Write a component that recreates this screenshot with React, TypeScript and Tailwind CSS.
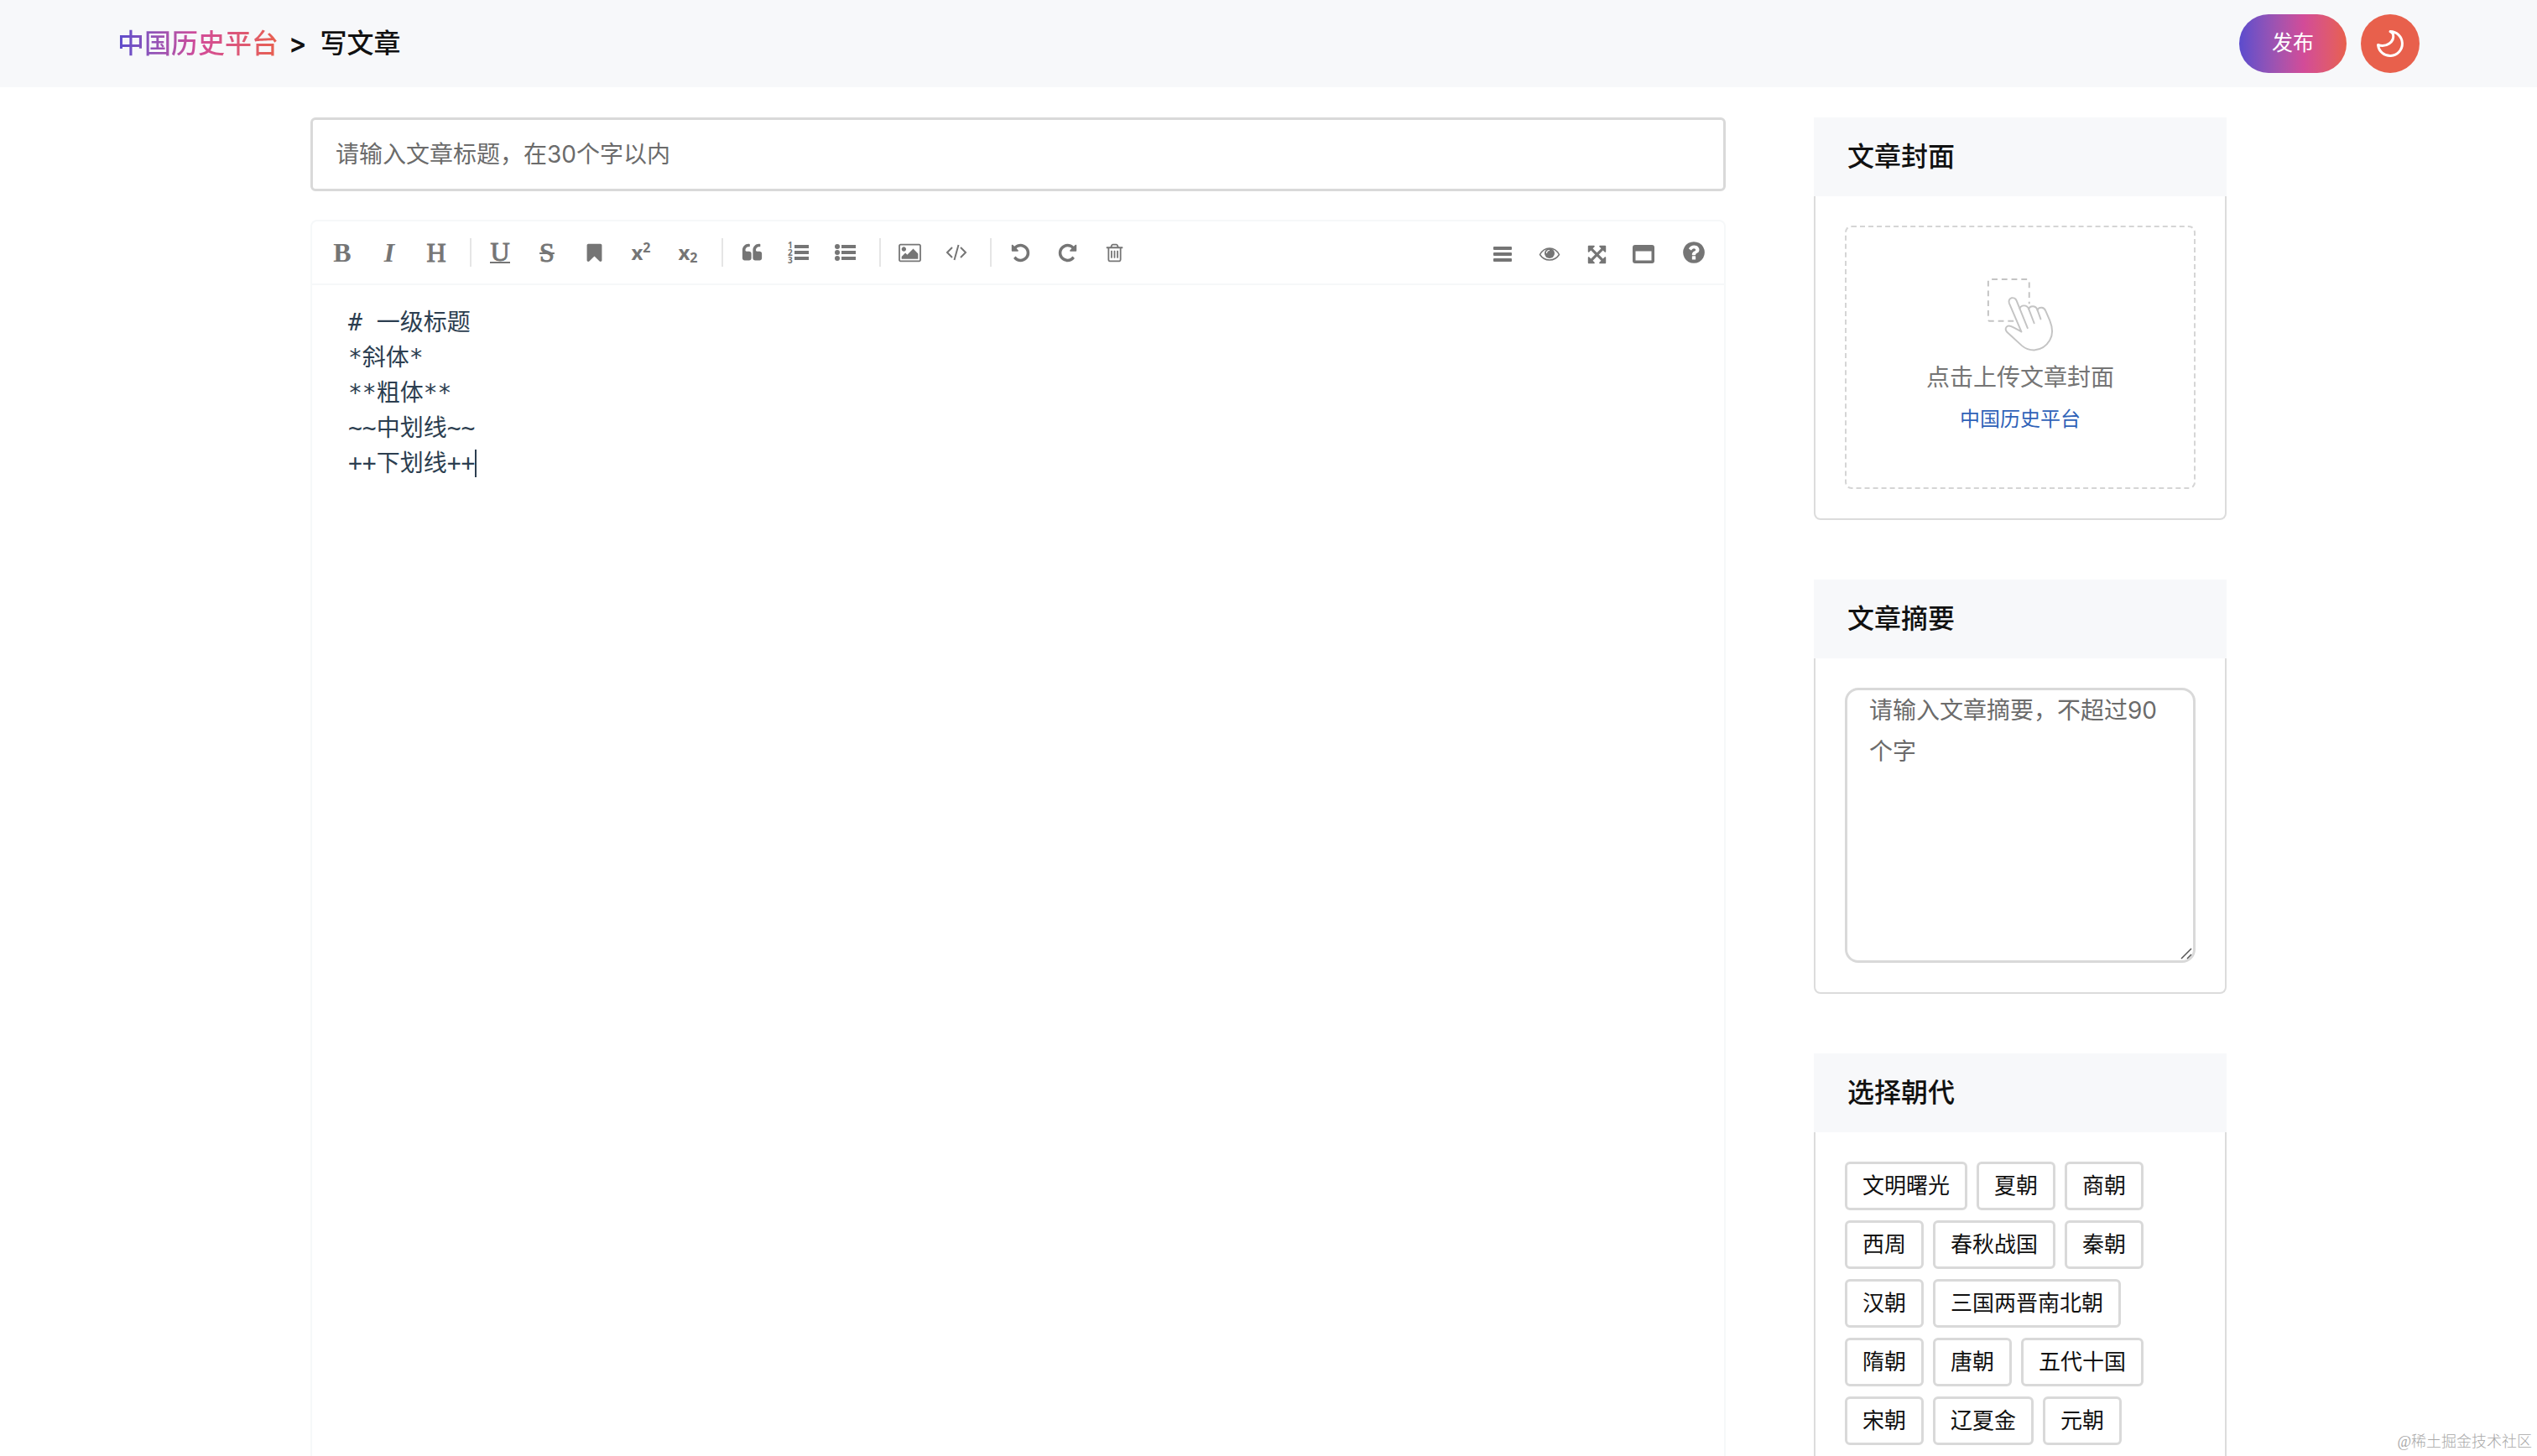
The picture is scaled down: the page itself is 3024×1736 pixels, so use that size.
import React, { useState } from 'react'

const DYNASTIES = [
  '文明曙光', '夏朝', '商朝',
  '西周', '春秋战国', '秦朝',
  '汉朝', '三国两晋南北朝',
  '隋朝', '唐朝', '五代十国',
  '宋朝', '辽夏金', '元朝',
]

const DEFAULT_CONTENT = '# 一级标题\n*斜体*\n**粗体**\n~~中划线~~\n++下划线++'

const UNDO_PATH = 'M1664 896q0 156-61 298t-164 245-245 164-298 61q-172 0-327-72.5t-264-204.5q-7-10-6.5-22.5t8.5-20.5l137-138q10-9 25-9 16 2 23 12 73 95 179 147t225 52q104 0 198.5-40.5t163.5-109.5 109.5-163.5 40.5-198.5-40.5-198.5-109.5-163.5-163.5-109.5-198.5-40.5q-98 0-188 35.5t-160 101.5l137 138q31 30 14 69-17 40-59 40h-448q-26 0-45-19t-19-45v-448q0-42 40-59 39-17 69 14l130 129q107-101 244.5-156.5t284.5-55.5q156 0 298 61t245 164 164 245 61 298z'
const BOOKMARK_PATH = 'M1420 128q23 0 44 9 33 13 52.5 41t19.5 62v1289q0 34-19.5 62t-52.5 41q-19 8-44 8-48 0-83-32l-441-424-441 424q-36 33-83 33-23 0-44-9-33-13-52.5-41t-19.5-62v-1289q0-34 19.5-62t52.5-41q21-9 44-9h1048z'
const QUOTE_PATH = 'M832 960v384q0 80-56 136t-136 56h-384q-80 0-136-56t-56-136v-704q0-104 40.5-198.5t109.5-163.5 163.5-109.5 198.5-40.5h64q26 0 45 19t19 45v128q0 26-19 45t-45 19h-64q-106 0-181 75t-75 181v32q0 40 28 68t68 28h224q80 0 136 56t56 136zm896 0v384q0 80-56 136t-136 56h-384q-80 0-136-56t-56-136v-704q0-104 40.5-198.5t109.5-163.5 163.5-109.5 198.5-40.5h64q26 0 45 19t19 45v128q0 26-19 45t-45 19h-64q-106 0-181 75t-75 181v32q0 40 28 68t68 28h224q80 0 136 56t56 136z'
const IMAGE_PATH = 'M576 576q0 80-56 136t-136 56-136-56-56-136 56-136 136-56 136 56 56 136zm1024 384v448h-1408v-192l320-320 160 160 512-512zm96-704h-1600q-13 0-22.5 9.5t-9.5 22.5v1216q0 13 9.5 22.5t22.5 9.5h1600q13 0 22.5-9.5t9.5-22.5v-1216q0-13-9.5-22.5t-22.5-9.5zm160 32v1216q0 66-47 113t-113 47h-1600q-66 0-113-47t-47-113v-1216q0-66 47-113t113-47h1600q66 0 113 47t47 113z'
const TRASH_PATH = 'M704 736v576q0 14-9 23t-23 9h-64q-14 0-23-9t-9-23v-576q0-14 9-23t23-9h64q14 0 23 9t9 23zm256 0v576q0 14-9 23t-23 9h-64q-14 0-23-9t-9-23v-576q0-14 9-23t23-9h64q14 0 23 9t9 23zm256 0v576q0 14-9 23t-23 9h-64q-14 0-23-9t-9-23v-576q0-14 9-23t23-9h64q14 0 23 9t9 23zm128 724v-948h-896v948q0 22 7 40.5t14.5 27 10.5 8.5h832q3 0 10.5-8.5t14.5-27 7-40.5zm-672-1076h448l-48-117q-7-9-17-11h-317q-10 2-17 11zm928 32v64q0 14-9 23t-23 9h-96v948q0 83-47 143.5t-113 60.5h-832q-66 0-113-58.5t-47-141.5v-952h-96q-14 0-23-9t-9-23v-64q0-14 9-23t23-9h309l70-167q15-37 54-63t79-26h320q40 0 79 26t54 63l70 167h309q14 0 23 9t9 23z'
const EXPAND_PATH = 'M1411 541l-355 355 355 355 144-144q29-31 70-14 39 17 39 59v448q0 26-19 45t-45 19h-448q-42 0-59-40-17-39 14-69l144-144-355-355-355 355 144 144q31 30 14 69-17 40-59 40h-448q-26 0-45-19t-19-45v-448q0-42 40-59 39-17 69 14l144 144 355-355-355-355-144 144q-19 19-45 19-12 0-24-5-40-17-40-59v-448q0-26 19-45t45-19h448q42 0 59 40 17 39-14 69l-144 144 355 355 355-355-144-144q-31-30-14-69 17-40 59-40h448q26 0 45 19t19 45v448q0 42-39 59-13 5-25 5-26 0-45-19z'
const HELP_PATH = 'M1024 1376v-192q0-14-9-23t-23-9h-192q-14 0-23 9t-9 23v192q0 14 9 23t23 9h192q14 0 23-9t9-23zm256-672q0-88-55.5-163t-138.5-116-170-41q-243 0-371 213-15 24 8 42l132 100q7 6 19 6 16 0 25-12 53-68 86-92 34-24 86-24 48 0 85.5 26t37.5 59q0 38-20 61t-68 45q-63 28-115.5 86.5t-52.5 125.5v36q0 14 9 23t23 9h192q14 0 23-9t9-23q0-19 21.5-49.5t54.5-49.5q32-18 49-28.5t46-35 44.5-48 28-60.5 12.5-81zm384 192q0 209-103 385.5t-279.5 279.5-385.5 103-385.5-103-279.5-279.5-103-385.5 103-385.5 279.5-279.5 385.5-103 385.5 103 279.5 279.5 103 385.5z'

const Glyph: React.FC<{ d: string; className?: string }> = ({ d, className = 'size-[25px]' }) => (
  <svg viewBox="0 0 1792 1792" fill="currentColor" className={`${className} overflow-visible`}>
    <path d={d} />
  </svg>
)

const ListIcon: React.FC<{ ordered?: boolean }> = ({ ordered }) => (
  <svg viewBox="0 0 26 26" fill="currentColor" className="size-[26px] overflow-visible">
    <path d="M8 4h17v4H8zM8 11h17v4H8zM8 18h17v4H8z" />
    {ordered ? (
      <g fontSize="10" fontWeight="700" fontFamily="Noto Sans, sans-serif">
        <text x="0" y="8">1</text>
        <text x="0" y="17">2</text>
        <text x="0" y="26">3</text>
      </g>
    ) : (
      <g>
        <circle cx="3" cy="6" r="3" />
        <circle cx="3" cy="13" r="3" />
        <circle cx="3" cy="20" r="3" />
      </g>
    )}
  </svg>
)

const CodeIcon = () => (
  <svg viewBox="0 0 26 22" fill="none" stroke="currentColor" strokeWidth="2" className="h-[22px] w-[26px]">
    <path d="M8 5L2 11l6 6M18 5l6 6-6 6M15.500 2L10.500 20" />
  </svg>
)

const EyeIcon = () => (
  <svg viewBox="0 0 26 18" fill="none" className="h-[18px] w-[26px]">
    <path d="M1.500 9.500C4 5 8 2 13 2s9 3 11.500 7.500C22 13.500 18 16 13 16S4 13.500 1.500 9.500z" stroke="currentColor" strokeWidth="1.500" />
    <circle cx="13" cy="8" r="6" fill="currentColor" />
    <path d="M9.500 8A3.500 3.500 0 0 1 13 4.500" stroke="#fff" strokeWidth="1.200" />
  </svg>
)

const MenuIcon = () => (
  <svg viewBox="0 0 22 18" fill="currentColor" className="h-[18px] w-[22px]">
    <rect y="0" width="22" height="4" rx="1" />
    <rect y="7" width="22" height="4" rx="1" />
    <rect y="14" width="22" height="4" rx="1" />
  </svg>
)

const WindowIcon = () => (
  <svg viewBox="0 0 26 22" fill="currentColor" className="h-[22px] w-[26px]">
    <path fillRule="evenodd" d="M3 0h20a3 3 0 0 1 3 3v16a3 3 0 0 1-3 3H3a3 3 0 0 1-3-3V3a3 3 0 0 1 3-3zM3.500 7.500v11h19v-11z" />
  </svg>
)

const MoonIcon = () => (
  <svg viewBox="0 0 34 34" fill="none" stroke="#fff" strokeWidth="3" strokeLinejoin="round" className="size-[34px]">
    <path d="M17 2.500A14.500 14.500 0 1 1 2.500 18.500C12 22 22.500 15 20.500 6Q19.500 3.500 17 2.500z" />
  </svg>
)

const UploadIcon = () => (
  <svg viewBox="0 0 80 88" fill="none" stroke="#c4c4c4" strokeWidth="2" strokeLinecap="round" strokeLinejoin="round" className="h-[86px] w-[80px] overflow-visible">
    <path d="M32 52H3a2 2 0 0 1-2-2V3a2 2 0 0 1 2-2h46a2 2 0 0 1 2 2v28" strokeDasharray="7 5" strokeLinecap="butt" />
    <path
      fill="#fff"
      d="M41.500 65L26.500 30C24.500 23 33.500 21.500 35.500 27L39.500 37C40.500 32 48.500 31.500 50.500 37.500C51.500 33 59 32.500 61 38.500C63 34.500 69 34.500 71 39.500L76 51C80 61 80 69 76 75.500C71 84 64 87 57 87.500C51 87.500 46 85.500 42 82L24 65.500C20 61 24 56 29 58.500C33 60.500 37 62.500 41.500 65z"
    />
    <path d="M39.500 37L49 60.500M50.500 37.500L57 54.500M61 38.500L65 49.500" />
  </svg>
)

const Divider = () => <span className="mr-[6px] ml-3 h-[34px] w-[2px] bg-[#e5e5e5]" />

const ToolButton: React.FC<{ label: string; children: React.ReactNode }> = ({ label, children }) => (
  <button
    type="button"
    aria-label={label}
    className="flex h-14 w-14 cursor-pointer items-center justify-center font-['Liberation_Serif',serif] text-[32px] leading-none hover:text-black"
  >
    {children}
  </button>
)

const Toolbar: React.FC = () => (
  <div className="flex h-[76px] items-center justify-between border-b-2 border-[#f6f8f9] px-2 text-[#757575]">
    <div className="flex items-center">
      <ToolButton label="粗体"><b>B</b></ToolButton>
      <ToolButton label="斜体"><b className="italic">I</b></ToolButton>
      <ToolButton label="标题"><span className="[-webkit-text-stroke:1px]">H</span></ToolButton>
      <Divider />
      <ToolButton label="下划线"><span className="h-[26px] border-b-2 border-[#757575] leading-6 [-webkit-text-stroke:1px]">U</span></ToolButton>
      <ToolButton label="中划线"><span className="line-through decoration-2 [-webkit-text-stroke:1px]">S</span></ToolButton>
      <ToolButton label="标记"><Glyph d={BOOKMARK_PATH} /></ToolButton>
      <ToolButton label="上角标">
        <span className="flex font-['Noto_Sans',sans-serif] text-2xl leading-6 font-bold">x<span className="text-base leading-3">2</span></span>
      </ToolButton>
      <ToolButton label="下角标">
        <span className="flex font-['Noto_Sans',sans-serif] text-2xl leading-6 font-bold">x<span className="self-end text-base leading-3">2</span></span>
      </ToolButton>
      <Divider />
      <ToolButton label="段落引用"><Glyph d={QUOTE_PATH} /></ToolButton>
      <ToolButton label="有序列表"><ListIcon ordered /></ToolButton>
      <ToolButton label="无序列表"><ListIcon /></ToolButton>
      <Divider />
      <ToolButton label="添加图片"><Glyph d={IMAGE_PATH} /></ToolButton>
      <ToolButton label="代码块"><CodeIcon /></ToolButton>
      <Divider />
      <ToolButton label="上一步"><Glyph d={UNDO_PATH} /></ToolButton>
      <ToolButton label="下一步"><Glyph d={UNDO_PATH} className="size-[25px] -scale-x-100" /></ToolButton>
      <ToolButton label="清空"><Glyph d={TRASH_PATH} /></ToolButton>
    </div>
    <div className="flex items-center">
      <div className="flex pt-1">
        <ToolButton label="导航目录"><MenuIcon /></ToolButton>
        <ToolButton label="预览"><EyeIcon /></ToolButton>
        <ToolButton label="全屏编辑"><Glyph d={EXPAND_PATH} /></ToolButton>
        <ToolButton label="沉浸式阅读"><WindowIcon /></ToolButton>
      </div>
      <div className="pl-1">
        <ToolButton label="帮助"><Glyph d={HELP_PATH} className="size-[30px]" /></ToolButton>
      </div>
    </div>
  </div>
)

const Card: React.FC<{ title: string; children: React.ReactNode }> = ({ title, children }) => (
  <section className="shrink-0">
    <h2 className="bg-[#f7f8fa] px-10 text-[32px] leading-[94px] font-medium text-[#111]">{title}</h2>
    <div className="rounded-b-lg border-2 border-t-0 border-[#dcdcdc] p-[35px]">{children}</div>
  </section>
)

const App: React.FC = () => {
  const [title, setTitle] = useState('')
  const [content, setContent] = useState(DEFAULT_CONTENT)
  const [summary, setSummary] = useState('')
  const [dynasty, setDynasty] = useState('')

  return (
    <div className="relative flex h-screen flex-col overflow-hidden bg-white font-['Inter','Noto_Sans_CJK_SC',sans-serif]">
      <header className="flex h-[104px] shrink-0 items-center justify-between bg-[#f7f8fa] px-[140px]">
        <nav className="flex items-center gap-3 text-[32px] leading-[48px] font-medium text-[#111]">
          <a href="#" className="bg-linear-to-r from-[#5b4bcd] via-[#d24b98] to-[#e8604c] bg-clip-text text-transparent">中国历史平台</a>
          <span className="mr-1 font-semibold">&gt;</span>
          <span>写文章</span>
        </nav>
        <div className="flex items-center gap-[17px]">
          <button type="button" className="h-[70px] w-32 cursor-pointer rounded-full bg-linear-to-r from-[#5b4bcd] via-[#d24b98] via-60% to-[#e8604c] text-[25px] text-white">
            发布
          </button>
          <button type="button" aria-label="夜间模式" className="flex size-[70px] cursor-pointer items-center justify-center rounded-full bg-[#e8604c]">
            <MoonIcon />
          </button>
        </div>
      </header>

      <main className="mx-auto flex min-h-0 w-full max-w-[2284px] flex-1 gap-[105px] pt-9">
        <div className="flex min-w-0 flex-1 flex-col gap-[34px]">
          <input
            type="text"
            aria-label="文章标题"
            value={title}
            onChange={(e) => setTitle(e.target.value)}
            placeholder="请输入文章标题，在30个字以内"
            className="h-[88px] w-full shrink-0 rounded-md border-3 border-[#d9d9d9] px-[27px] text-[28px] text-[#333] outline-none placeholder:text-[#6b6b6b]"
          />

          <div className="flex min-h-0 flex-1 flex-col rounded-t-lg border-2 border-b-0 border-[#f6f8f9]">
            <Toolbar />
            <div className="relative flex-1">
              <textarea
                aria-label="文章内容"
                value={content}
                onChange={(e) => setContent(e.target.value)}
                spellCheck={false}
                className="block size-full resize-none px-[43px] pt-6 font-['DejaVu_Sans_Mono','Noto_Sans_CJK_SC',monospace] text-[28px] leading-[42px] text-[#2c3e50] outline-none"
              />
              <span className="absolute top-[196px] left-[194px] h-[33px] w-[2px] bg-[#2c3e50]" />
            </div>
          </div>
        </div>

        <aside className="flex w-[492px] shrink-0 flex-col gap-[71px]">
          <Card title="文章封面">
            <label className="flex cursor-pointer flex-col items-center rounded-lg border-2 border-dashed border-[#d5d5d5] pt-[61px] pb-[57px]">
              <input type="file" accept="image/*" className="sr-only" />
              <UploadIcon />
              <span className="mt-[6px] text-[28px] leading-[52px] text-[#757575]">点击上传文章封面</span>
              <span className="text-2xl leading-[48px] text-[#2f62b8]">中国历史平台</span>
            </label>
          </Card>

          <Card title="文章摘要">
            <div className="relative">
              <textarea
                aria-label="文章摘要"
                value={summary}
                onChange={(e) => setSummary(e.target.value)}
                placeholder="请输入文章摘要，不超过90个字"
                className="block h-[328px] w-full resize-none rounded-2xl border-3 border-[#d9d9d9] px-[26px] text-[28px] leading-[49px] text-[#333] outline-none placeholder:text-[#6b6b6b]"
              />
              <svg viewBox="0 0 14 14" stroke="#555" strokeWidth="1.500" className="pointer-events-none absolute right-1 bottom-1 size-[14px]">
                <path d="M1 13L13 1M8 13l5-5" />
              </svg>
            </div>
          </Card>

          <Card title="选择朝代">
            <div className="flex flex-wrap gap-x-[11px] gap-y-3">
              {DYNASTIES.map((name) => (
                <button
                  key={name}
                  type="button"
                  aria-pressed={dynasty === name}
                  onClick={() => setDynasty(name)}
                  className="h-[58px] cursor-pointer rounded-md border-3 border-[#d9d9d9] px-[18px] text-[26px] leading-[52px] text-[#111]"
                >
                  {name}
                </button>
              ))}
            </div>
          </Card>
        </aside>
      </main>

      <span className="absolute right-[6px] bottom-[5px] font-['Liberation_Serif','Noto_Sans_CJK_SC',serif] text-lg leading-6 font-light text-[#a8a8a8]">@稀土掘金技术社区</span>
    </div>
  )
}

export default App
